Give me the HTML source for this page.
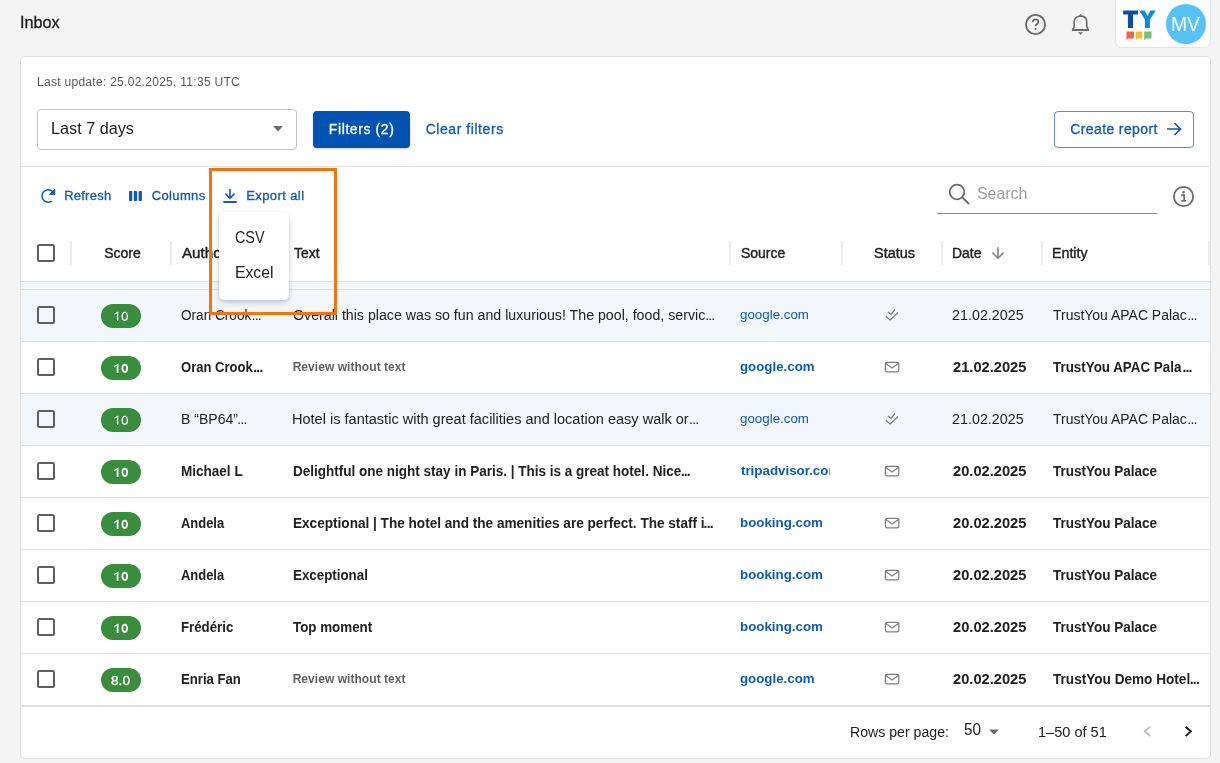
<!DOCTYPE html>
<html><head><meta charset="utf-8"><style>
html,body{margin:0;padding:0;}
body{width:1220px;height:763px;overflow:hidden;background:#f4f4f4;position:relative;font-family:"Liberation Sans", sans-serif;}
.t{position:absolute;white-space:nowrap;line-height:1;}
#w{position:absolute;left:0;top:0;width:1220px;height:763px;background:#f4f4f4;will-change:transform;overflow:hidden;}
</style></head><body><div id="w">
<div class="t" style="left:20.33px;top:15.26px;font-size:16px;font-weight:400;color:#1f1f1f;transform:scaleX(1.0133);transform-origin:0 0;-webkit-text-stroke:0.35px #1f1f1f;">Inbox</div>
<svg style="position:absolute;left:1024px;top:13px;" width="23" height="23" viewBox="0 0 23 23"><circle cx="11.5" cy="11.5" r="9.6" fill="none" stroke="#6b6b6b" stroke-width="1.9"/><path d="M8.6 9.2 C8.6 7.4 9.9 6.4 11.5 6.4 C13.1 6.4 14.4 7.4 14.4 9 C14.4 10.9 11.6 11 11.6 13" fill="none" stroke="#6b6b6b" stroke-width="1.8"/><circle cx="11.6" cy="16" r="1.1" fill="#6b6b6b"/></svg>
<svg style="position:absolute;left:1070px;top:12px;" width="21" height="24" viewBox="0 0 21 24"><path d="M2.6 17.9 L4.1 14.8 L4.2 9.5 C4.3 6.2 6.9 4.1 10.5 4.1 C14.1 4.1 16.6 6.2 16.7 9.5 L16.8 14.8 L18.4 17.9 Z" fill="none" stroke="#6b6b6b" stroke-width="1.6" stroke-linejoin="round"/><path d="M2 18 H19" stroke="#6b6b6b" stroke-width="1.8"/><path d="M9.5 4.3 L10.5 2 L11.5 4.3 Z" fill="#6b6b6b" stroke="#6b6b6b" stroke-width="0.8"/><path d="M7.8 20.3 L13.1 20.3 L10.5 22.8 Z" fill="#6b6b6b"/></svg>
<div style="position:absolute;left:1115px;top:-6px;width:96px;height:54px;background:#fff;border:1px solid #e3e3e3;border-radius:7px;box-sizing:border-box;"></div>
<svg style="position:absolute;left:1115px;top:0px;" width="50" height="48" viewBox="0 0 50 48"><path d="M8.2 10.4 H23 V14.5 H18.1 V28 H12.9 V14.5 H8.2 Z" fill="#0a4f9e"/><path d="M24.2 10.4 H29.7 L32.5 15.9 L35.3 10.4 H40.9 L34.9 19.6 V28 H29.9 V19.6 Z" fill="#0a8ee0"/><path d="M11.5 31.4 H18.9 V38.4 H13.3 L11.5 40.2 Z" fill="#f4634c"/><path d="M20.8 31.4 H27.4 V38.4 H22.5 L20.8 40.2 Z" fill="#fbbc2d"/><path d="M29.2 31.4 H36.5 V38.4 H31 L29.2 40.2 Z" fill="#73c07a"/></svg>
<div style="position:absolute;left:1166px;top:4px;width:40px;height:40px;background:#56c3f5;border-radius:50%;"></div>
<div class="t" style="left:1170.61px;top:14.07px;font-size:20px;font-weight:400;color:#fff;transform:scaleX(0.9647);transform-origin:0 0;">MV</div>
<div style="position:absolute;left:20px;top:56px;width:1191px;height:703px;background:#fff;border:1px solid #e0e0e0;border-radius:5px;box-sizing:border-box;"></div>
<div class="t" style="left:37.05px;top:75.84px;font-size:12px;font-weight:400;color:#5a5a5a;letter-spacing:0.285px;">Last update: 25.02.2025, 11:35 UTC</div>
<div style="position:absolute;left:37px;top:109px;width:260px;height:41px;border:1px solid #c4c4c4;border-radius:4px;box-sizing:border-box;"></div>
<div class="t" style="left:50.63px;top:120.86px;font-size:16px;font-weight:400;color:#212121;transform:scaleX(1.0138);transform-origin:0 0;">Last 7 days</div>
<svg style="position:absolute;left:273px;top:126px;" width="10" height="6" viewBox="0 0 10 6"><path d="M0 0 H10 L5 5.5 Z" fill="#6b6b6b"/></svg>
<div style="position:absolute;left:313px;top:111px;width:97px;height:37px;background:#0053b3;border-radius:4px;box-shadow:0 1px 2px rgba(0,0,0,0.2);"></div>
<div class="t" style="left:328.85px;top:122.35px;font-size:14px;font-weight:400;color:#fff;letter-spacing:0.590px;-webkit-text-stroke:0.3px #fff;">Filters (2)</div>
<div class="t" style="left:425.65px;top:122.35px;font-size:14px;font-weight:400;color:#0d5bb5;letter-spacing:0.558px;-webkit-text-stroke:0.3px #0d5bb5;">Clear filters</div>
<div style="position:absolute;left:1054px;top:111px;width:140px;height:37px;border:1px solid #5a8fd0;border-radius:4px;box-sizing:border-box;"></div>
<div class="t" style="left:1070.25px;top:122.05px;font-size:14px;font-weight:400;color:#0d5bb5;letter-spacing:0.383px;-webkit-text-stroke:0.3px #0d5bb5;">Create report</div>
<svg style="position:absolute;left:1165px;top:121px;" width="18" height="16" viewBox="0 0 18 16"><path d="M2 8 H15.5 M9.5 2 L15.5 8 L9.5 14" fill="none" stroke="#0d5bb5" stroke-width="1.7"/></svg>
<div style="position:absolute;left:21px;top:166px;width:1189px;height:1px;background:#e0e0e0;"></div>
<svg style="position:absolute;left:38px;top:185px;" width="22" height="21" viewBox="0 0 22 21"><path d="M15.72 8.19 A6.2 6.2 0 1 0 13.76 16.08" fill="none" stroke="#0d5bb5" stroke-width="1.5"/><path d="M16.8 4.1 V9.5 H11.6 Z" fill="#0d5bb5" stroke="#0d5bb5" stroke-width="0.9" stroke-linejoin="round"/></svg>
<div class="t" style="left:64.15px;top:188.90px;font-size:13px;font-weight:400;color:#0d5bb5;letter-spacing:0.250px;-webkit-text-stroke:0.3px #0d5bb5;">Refresh</div>
<svg style="position:absolute;left:128px;top:190px;" width="15" height="12" viewBox="0 0 15 12"><rect x="1" y="1" width="3.3" height="10" rx="0.8" fill="#0d5bb5"/><rect x="5.8" y="1" width="3.3" height="10" rx="0.8" fill="#0d5bb5"/><rect x="10.6" y="1" width="3.3" height="10" rx="0.8" fill="#0d5bb5"/></svg>
<div class="t" style="left:151.65px;top:188.90px;font-size:13px;font-weight:400;color:#0d5bb5;letter-spacing:0.383px;-webkit-text-stroke:0.3px #0d5bb5;">Columns</div>
<svg style="position:absolute;left:222px;top:184px;" width="16" height="20" viewBox="0 0 16 20"><path d="M8 5 V14 M3.3 9.5 L8 14.3 L12.7 9.5" fill="none" stroke="#0d5bb5" stroke-width="1.6"/><path d="M2 18 H14" stroke="#0d5bb5" stroke-width="1.8" stroke-linecap="round"/></svg>
<div class="t" style="left:246.15px;top:188.90px;font-size:13px;font-weight:400;color:#0d5bb5;letter-spacing:0.411px;-webkit-text-stroke:0.3px #0d5bb5;">Export all</div>
<svg style="position:absolute;left:947px;top:182px;" width="25" height="24" viewBox="0 0 25 24"><circle cx="10" cy="10" r="7.3" fill="none" stroke="#6b6b6b" stroke-width="1.8"/><path d="M15.3 15.3 L22 22" stroke="#6b6b6b" stroke-width="1.9"/></svg>
<div class="t" style="left:976.75px;top:186.46px;font-size:16px;font-weight:400;color:#9e9e9e;transform:scaleX(0.9939);transform-origin:0 0;">Search</div>
<div style="position:absolute;left:937px;top:213px;width:220px;height:1px;background:#8a8a8a;"></div>
<svg style="position:absolute;left:1172px;top:185px;" width="23" height="23" viewBox="0 0 23 23"><circle cx="11.5" cy="11.5" r="9.6" fill="none" stroke="#6b6b6b" stroke-width="1.8"/><circle cx="11.5" cy="7.3" r="1.2" fill="#6b6b6b"/><path d="M9.3 10.2 H12.2 V15.6 M9.3 15.8 H14" fill="none" stroke="#6b6b6b" stroke-width="1.7"/></svg>
<div style="position:absolute;left:37px;top:244px;width:18px;height:18px;border:2px solid #5f5f5f;border-radius:2.5px;box-sizing:border-box;"></div>
<div style="position:absolute;left:70px;top:241px;width:2px;height:24px;background:#ececec;"></div>
<div style="position:absolute;left:170px;top:241px;width:2px;height:24px;background:#ececec;"></div>
<div style="position:absolute;left:281px;top:241px;width:2px;height:24px;background:#ececec;"></div>
<div style="position:absolute;left:729px;top:241px;width:2px;height:24px;background:#ececec;"></div>
<div style="position:absolute;left:841px;top:241px;width:2px;height:24px;background:#ececec;"></div>
<div style="position:absolute;left:941px;top:241px;width:2px;height:24px;background:#ececec;"></div>
<div style="position:absolute;left:1041px;top:241px;width:2px;height:24px;background:#ececec;"></div>
<div style="position:absolute;left:1208px;top:241px;width:2px;height:24px;background:#ececec;"></div>
<div class="t" style="left:104.15px;top:246.15px;font-size:14px;font-weight:400;color:#1f1f1f;-webkit-text-stroke:0.4px #1f1f1f;">Score</div>
<div class="t" style="left:181.95px;top:246.15px;font-size:14px;font-weight:400;color:#1f1f1f;transform:scaleX(1.0841);transform-origin:0 0;-webkit-text-stroke:0.4px #1f1f1f;">Author</div>
<div class="t" style="left:293.95px;top:246.15px;font-size:14px;font-weight:400;color:#1f1f1f;transform:scaleX(0.9960);transform-origin:0 0;-webkit-text-stroke:0.4px #1f1f1f;">Text</div>
<div class="t" style="left:740.75px;top:246.15px;font-size:14px;font-weight:400;color:#1f1f1f;transform:scaleX(0.9977);transform-origin:0 0;-webkit-text-stroke:0.4px #1f1f1f;">Source</div>
<div class="t" style="left:873.93px;top:246.15px;font-size:14px;font-weight:400;color:#1f1f1f;transform:scaleX(1.0311);transform-origin:0 0;-webkit-text-stroke:0.4px #1f1f1f;">Status</div>
<div class="t" style="left:952.36px;top:246.15px;font-size:14px;font-weight:400;color:#1f1f1f;transform:scaleX(0.9928);transform-origin:0 0;-webkit-text-stroke:0.4px #1f1f1f;">Date</div>
<svg style="position:absolute;left:990px;top:244px;" width="16" height="16" viewBox="0 0 16 16"><path d="M8 3.2 V14 M2.4 8.6 L8 14.2 L13.6 8.6" fill="none" stroke="#858585" stroke-width="1.6"/></svg>
<div class="t" style="left:1052.13px;top:246.15px;font-size:14px;font-weight:400;color:#1f1f1f;transform:scaleX(1.0147);transform-origin:0 0;-webkit-text-stroke:0.4px #1f1f1f;">Entity</div>
<div style="position:absolute;left:21px;top:281px;width:1189px;height:1px;background:#e0e0e0;"></div>
<div style="position:absolute;left:21px;top:282px;width:1189px;height:7px;background:#f3f6fb;"></div>
<div style="position:absolute;left:21px;top:289px;width:1189px;height:52px;background:#f3f6fb;"></div>
<div style="position:absolute;left:21px;top:289px;width:1189px;height:1px;background:#e0e0e0;"></div>
<div style="position:absolute;left:37px;top:306px;width:18px;height:18px;border:2px solid #5f5f5f;border-radius:2.5px;box-sizing:border-box;"></div>
<div style="position:absolute;left:101px;top:304px;width:40px;height:24px;background:#388e3c;border-radius:12px;"></div>
<svg style="position:absolute;left:101px;top:304px;" width="40" height="24" viewBox="0 0 40 24"><path d="M17.25 17 V7.7 H16.65 L13.2 9.7 V10.87 L15.95 9.34 V17 Z" fill="#fff"/><ellipse cx="23.75" cy="12.35" rx="2.55" ry="4.00" fill="none" stroke="#fff" stroke-width="1.3"/></svg>
<div class="t" style="left:181.17px;top:308.15px;font-size:14px;font-weight:400;color:#212121;transform:scaleX(0.9708);transform-origin:0 0;">Oran Crook</div>
<div class="t" style="left:251.65px;top:308.15px;font-size:14px;font-weight:400;color:#212121;letter-spacing:-0.800px;">...</div>
<div class="t" style="left:292.84px;top:308.15px;font-size:14px;font-weight:400;color:#212121;transform:scaleX(1.0135);transform-origin:0 0;">Overall this place was so fun and luxurious! The pool, food, servic</div>
<div class="t" style="left:705.15px;top:308.15px;font-size:14px;font-weight:400;color:#212121;letter-spacing:-0.800px;">...</div>
<div class="t" style="left:740.34px;top:308.20px;font-size:13px;font-weight:400;color:#0d5bb5;transform:scaleX(1.0258);transform-origin:0 0;">google.com</div>
<svg style="position:absolute;left:884px;top:307px;" width="16" height="15" viewBox="0 0 16 15"><path d="M3.8 5.1 L7 7.3 L11 2.3 M2 9.3 L6 13 L14 5.7" fill="none" stroke="#7d7d7d" stroke-width="1.25"/></svg>
<div class="t" style="left:952.33px;top:308.15px;font-size:14px;font-weight:400;color:#212121;transform:scaleX(1.0233);transform-origin:0 0;">21.02.2025</div>
<div class="t" style="left:1052.95px;top:308.15px;font-size:14px;font-weight:400;color:#212121;transform:scaleX(0.9978);transform-origin:0 0;">TrustYou APAC Palac</div>
<div class="t" style="left:1187.35px;top:308.15px;font-size:14px;font-weight:400;color:#212121;letter-spacing:-0.800px;">...</div>
<div style="position:absolute;left:21px;top:341px;width:1189px;height:52px;background:#fff;"></div>
<div style="position:absolute;left:21px;top:341px;width:1189px;height:1px;background:#e0e0e0;"></div>
<div style="position:absolute;left:37px;top:358px;width:18px;height:18px;border:2px solid #5f5f5f;border-radius:2.5px;box-sizing:border-box;"></div>
<div style="position:absolute;left:101px;top:356px;width:40px;height:24px;background:#388e3c;border-radius:12px;"></div>
<svg style="position:absolute;left:101px;top:356px;" width="40" height="24" viewBox="0 0 40 24"><path d="M17.48 17 V7.7 H16.88 L13.2 9.7 V11.27 L15.73 9.70 V17 Z" fill="#fff"/><ellipse cx="23.75" cy="12.35" rx="2.33" ry="3.78" fill="none" stroke="#fff" stroke-width="1.75"/></svg>
<div class="t" style="left:181.28px;top:360.15px;font-size:14px;font-weight:700;color:#212121;transform:scaleX(0.9307);transform-origin:0 0;">Oran Crook</div>
<div class="t" style="left:253.25px;top:360.15px;font-size:14px;font-weight:700;color:#212121;letter-spacing:-0.800px;">...</div>
<div class="t" style="left:292.65px;top:360.84px;font-size:12px;font-weight:700;color:#616161;letter-spacing:0.050px;">Review without text</div>
<div class="t" style="left:740.34px;top:360.20px;font-size:13px;font-weight:700;color:#0d5bb5;transform:scaleX(1.0223);transform-origin:0 0;">google.com</div>
<svg style="position:absolute;left:884px;top:361px;" width="16" height="13" viewBox="0 0 16 13"><rect x="1.4" y="1.4" width="13.4" height="9.4" rx="1.5" fill="none" stroke="#7d7d7d" stroke-width="1.2"/><path d="M1.8 2.6 L8.1 7.1 L14.4 2.6" fill="none" stroke="#7d7d7d" stroke-width="1.2"/></svg>
<div class="t" style="left:952.53px;top:360.15px;font-size:14px;font-weight:700;color:#212121;transform:scaleX(1.0477);transform-origin:0 0;">21.02.2025</div>
<div class="t" style="left:1053.15px;top:360.15px;font-size:14px;font-weight:700;color:#212121;transform:scaleX(0.9555);transform-origin:0 0;">TrustYou APAC Pala</div>
<div class="t" style="left:1182.45px;top:360.15px;font-size:14px;font-weight:700;color:#212121;letter-spacing:-0.800px;">...</div>
<div style="position:absolute;left:21px;top:393px;width:1189px;height:52px;background:#f3f6fb;"></div>
<div style="position:absolute;left:21px;top:393px;width:1189px;height:1px;background:#e0e0e0;"></div>
<div style="position:absolute;left:37px;top:410px;width:18px;height:18px;border:2px solid #5f5f5f;border-radius:2.5px;box-sizing:border-box;"></div>
<div style="position:absolute;left:101px;top:408px;width:40px;height:24px;background:#388e3c;border-radius:12px;"></div>
<svg style="position:absolute;left:101px;top:408px;" width="40" height="24" viewBox="0 0 40 24"><path d="M17.25 17 V7.7 H16.65 L13.2 9.7 V10.87 L15.95 9.34 V17 Z" fill="#fff"/><ellipse cx="23.75" cy="12.35" rx="2.55" ry="4.00" fill="none" stroke="#fff" stroke-width="1.3"/></svg>
<div class="t" style="left:180.65px;top:412.15px;font-size:14px;font-weight:400;color:#212121;transform:scaleX(1.0036);transform-origin:0 0;">B “BP64”</div>
<div class="t" style="left:237.35px;top:412.15px;font-size:14px;font-weight:400;color:#212121;letter-spacing:-0.800px;">...</div>
<div class="t" style="left:292.31px;top:412.15px;font-size:14px;font-weight:400;color:#212121;transform:scaleX(1.0383);transform-origin:0 0;">Hotel is fantastic with great facilities and location easy walk or</div>
<div class="t" style="left:689.05px;top:412.15px;font-size:14px;font-weight:400;color:#212121;letter-spacing:-0.800px;">...</div>
<div class="t" style="left:740.34px;top:412.20px;font-size:13px;font-weight:400;color:#0d5bb5;transform:scaleX(1.0258);transform-origin:0 0;">google.com</div>
<svg style="position:absolute;left:884px;top:411px;" width="16" height="15" viewBox="0 0 16 15"><path d="M3.8 5.1 L7 7.3 L11 2.3 M2 9.3 L6 13 L14 5.7" fill="none" stroke="#7d7d7d" stroke-width="1.25"/></svg>
<div class="t" style="left:952.33px;top:412.15px;font-size:14px;font-weight:400;color:#212121;transform:scaleX(1.0233);transform-origin:0 0;">21.02.2025</div>
<div class="t" style="left:1052.95px;top:412.15px;font-size:14px;font-weight:400;color:#212121;transform:scaleX(0.9978);transform-origin:0 0;">TrustYou APAC Palac</div>
<div class="t" style="left:1187.35px;top:412.15px;font-size:14px;font-weight:400;color:#212121;letter-spacing:-0.800px;">...</div>
<div style="position:absolute;left:21px;top:445px;width:1189px;height:52px;background:#fff;"></div>
<div style="position:absolute;left:21px;top:445px;width:1189px;height:1px;background:#e0e0e0;"></div>
<div style="position:absolute;left:37px;top:462px;width:18px;height:18px;border:2px solid #5f5f5f;border-radius:2.5px;box-sizing:border-box;"></div>
<div style="position:absolute;left:101px;top:460px;width:40px;height:24px;background:#388e3c;border-radius:12px;"></div>
<svg style="position:absolute;left:101px;top:460px;" width="40" height="24" viewBox="0 0 40 24"><path d="M17.48 17 V7.7 H16.88 L13.2 9.7 V11.27 L15.73 9.70 V17 Z" fill="#fff"/><ellipse cx="23.75" cy="12.35" rx="2.33" ry="3.78" fill="none" stroke="#fff" stroke-width="1.75"/></svg>
<div class="t" style="left:180.88px;top:464.15px;font-size:14px;font-weight:700;color:#212121;transform:scaleX(0.9664);transform-origin:0 0;">Michael L</div>
<div class="t" style="left:292.58px;top:464.15px;font-size:14px;font-weight:700;color:#212121;transform:scaleX(0.9651);transform-origin:0 0;">Delightful one night stay in Paris. | This is a great hotel. Nice</div>
<div class="t" style="left:680.65px;top:464.15px;font-size:14px;font-weight:700;color:#212121;letter-spacing:-0.800px;">...</div>
<div style="position:absolute;left:740.85px;top:460.20px;width:89.2px;height:21px;overflow:hidden;"><div class="t" style="left:-0.10px;top:4px;font-size:13px;font-weight:700;color:#0d5bb5;transform:scaleX(1.0251);transform-origin:0 0;">tripadvisor.com</div></div>
<svg style="position:absolute;left:884px;top:465px;" width="16" height="13" viewBox="0 0 16 13"><rect x="1.4" y="1.4" width="13.4" height="9.4" rx="1.5" fill="none" stroke="#7d7d7d" stroke-width="1.2"/><path d="M1.8 2.6 L8.1 7.1 L14.4 2.6" fill="none" stroke="#7d7d7d" stroke-width="1.2"/></svg>
<div class="t" style="left:952.53px;top:464.15px;font-size:14px;font-weight:700;color:#212121;transform:scaleX(1.0477);transform-origin:0 0;">20.02.2025</div>
<div class="t" style="left:1053.15px;top:464.15px;font-size:14px;font-weight:700;color:#212121;transform:scaleX(0.9637);transform-origin:0 0;">TrustYou Palace</div>
<div style="position:absolute;left:21px;top:497px;width:1189px;height:52px;background:#fff;"></div>
<div style="position:absolute;left:21px;top:497px;width:1189px;height:1px;background:#e0e0e0;"></div>
<div style="position:absolute;left:37px;top:514px;width:18px;height:18px;border:2px solid #5f5f5f;border-radius:2.5px;box-sizing:border-box;"></div>
<div style="position:absolute;left:101px;top:512px;width:40px;height:24px;background:#388e3c;border-radius:12px;"></div>
<svg style="position:absolute;left:101px;top:512px;" width="40" height="24" viewBox="0 0 40 24"><path d="M17.48 17 V7.7 H16.88 L13.2 9.7 V11.27 L15.73 9.70 V17 Z" fill="#fff"/><ellipse cx="23.75" cy="12.35" rx="2.33" ry="3.78" fill="none" stroke="#fff" stroke-width="1.75"/></svg>
<div class="t" style="left:181.47px;top:516.15px;font-size:14px;font-weight:700;color:#212121;transform:scaleX(0.9247);transform-origin:0 0;">Andela</div>
<div class="t" style="left:292.58px;top:516.15px;font-size:14px;font-weight:700;color:#212121;transform:scaleX(0.9706);transform-origin:0 0;">Exceptional | The hotel and the amenities are perfect. The staff i</div>
<div class="t" style="left:703.55px;top:516.15px;font-size:14px;font-weight:700;color:#212121;letter-spacing:-0.800px;">...</div>
<div class="t" style="left:740.03px;top:516.20px;font-size:13px;font-weight:700;color:#0d5bb5;transform:scaleX(1.0252);transform-origin:0 0;">booking.com</div>
<svg style="position:absolute;left:884px;top:517px;" width="16" height="13" viewBox="0 0 16 13"><rect x="1.4" y="1.4" width="13.4" height="9.4" rx="1.5" fill="none" stroke="#7d7d7d" stroke-width="1.2"/><path d="M1.8 2.6 L8.1 7.1 L14.4 2.6" fill="none" stroke="#7d7d7d" stroke-width="1.2"/></svg>
<div class="t" style="left:952.53px;top:516.15px;font-size:14px;font-weight:700;color:#212121;transform:scaleX(1.0477);transform-origin:0 0;">20.02.2025</div>
<div class="t" style="left:1053.15px;top:516.15px;font-size:14px;font-weight:700;color:#212121;transform:scaleX(0.9637);transform-origin:0 0;">TrustYou Palace</div>
<div style="position:absolute;left:21px;top:549px;width:1189px;height:52px;background:#fff;"></div>
<div style="position:absolute;left:21px;top:549px;width:1189px;height:1px;background:#e0e0e0;"></div>
<div style="position:absolute;left:37px;top:566px;width:18px;height:18px;border:2px solid #5f5f5f;border-radius:2.5px;box-sizing:border-box;"></div>
<div style="position:absolute;left:101px;top:564px;width:40px;height:24px;background:#388e3c;border-radius:12px;"></div>
<svg style="position:absolute;left:101px;top:564px;" width="40" height="24" viewBox="0 0 40 24"><path d="M17.48 17 V7.7 H16.88 L13.2 9.7 V11.27 L15.73 9.70 V17 Z" fill="#fff"/><ellipse cx="23.75" cy="12.35" rx="2.33" ry="3.78" fill="none" stroke="#fff" stroke-width="1.75"/></svg>
<div class="t" style="left:181.47px;top:568.15px;font-size:14px;font-weight:700;color:#212121;transform:scaleX(0.9247);transform-origin:0 0;">Andela</div>
<div class="t" style="left:292.59px;top:568.15px;font-size:14px;font-weight:700;color:#212121;transform:scaleX(0.9531);transform-origin:0 0;">Exceptional</div>
<div class="t" style="left:740.03px;top:568.20px;font-size:13px;font-weight:700;color:#0d5bb5;transform:scaleX(1.0252);transform-origin:0 0;">booking.com</div>
<svg style="position:absolute;left:884px;top:569px;" width="16" height="13" viewBox="0 0 16 13"><rect x="1.4" y="1.4" width="13.4" height="9.4" rx="1.5" fill="none" stroke="#7d7d7d" stroke-width="1.2"/><path d="M1.8 2.6 L8.1 7.1 L14.4 2.6" fill="none" stroke="#7d7d7d" stroke-width="1.2"/></svg>
<div class="t" style="left:952.53px;top:568.15px;font-size:14px;font-weight:700;color:#212121;transform:scaleX(1.0477);transform-origin:0 0;">20.02.2025</div>
<div class="t" style="left:1053.15px;top:568.15px;font-size:14px;font-weight:700;color:#212121;transform:scaleX(0.9637);transform-origin:0 0;">TrustYou Palace</div>
<div style="position:absolute;left:21px;top:601px;width:1189px;height:52px;background:#fff;"></div>
<div style="position:absolute;left:21px;top:601px;width:1189px;height:1px;background:#e0e0e0;"></div>
<div style="position:absolute;left:37px;top:618px;width:18px;height:18px;border:2px solid #5f5f5f;border-radius:2.5px;box-sizing:border-box;"></div>
<div style="position:absolute;left:101px;top:616px;width:40px;height:24px;background:#388e3c;border-radius:12px;"></div>
<svg style="position:absolute;left:101px;top:616px;" width="40" height="24" viewBox="0 0 40 24"><path d="M17.48 17 V7.7 H16.88 L13.2 9.7 V11.27 L15.73 9.70 V17 Z" fill="#fff"/><ellipse cx="23.75" cy="12.35" rx="2.33" ry="3.78" fill="none" stroke="#fff" stroke-width="1.75"/></svg>
<div class="t" style="left:180.90px;top:620.15px;font-size:14px;font-weight:700;color:#212121;transform:scaleX(0.9462);transform-origin:0 0;">Frédéric</div>
<div class="t" style="left:293.35px;top:620.15px;font-size:14px;font-weight:700;color:#212121;transform:scaleX(0.9553);transform-origin:0 0;">Top moment</div>
<div class="t" style="left:740.03px;top:620.20px;font-size:13px;font-weight:700;color:#0d5bb5;transform:scaleX(1.0252);transform-origin:0 0;">booking.com</div>
<svg style="position:absolute;left:884px;top:621px;" width="16" height="13" viewBox="0 0 16 13"><rect x="1.4" y="1.4" width="13.4" height="9.4" rx="1.5" fill="none" stroke="#7d7d7d" stroke-width="1.2"/><path d="M1.8 2.6 L8.1 7.1 L14.4 2.6" fill="none" stroke="#7d7d7d" stroke-width="1.2"/></svg>
<div class="t" style="left:952.53px;top:620.15px;font-size:14px;font-weight:700;color:#212121;transform:scaleX(1.0477);transform-origin:0 0;">20.02.2025</div>
<div class="t" style="left:1053.15px;top:620.15px;font-size:14px;font-weight:700;color:#212121;transform:scaleX(0.9637);transform-origin:0 0;">TrustYou Palace</div>
<div style="position:absolute;left:21px;top:653px;width:1189px;height:52px;background:#fff;"></div>
<div style="position:absolute;left:21px;top:653px;width:1189px;height:1px;background:#e0e0e0;"></div>
<div style="position:absolute;left:37px;top:670px;width:18px;height:18px;border:2px solid #5f5f5f;border-radius:2.5px;box-sizing:border-box;"></div>
<div style="position:absolute;left:101px;top:668px;width:40px;height:24px;background:#388e3c;border-radius:12px;"></div>
<div class="t" style="left:111.47px;top:674.00px;font-size:13px;font-weight:400;color:#fff;transform:scaleX(1.0526);transform-origin:0 0;-webkit-text-stroke:0.35px #fff;">8.0</div>
<div class="t" style="left:180.91px;top:672.15px;font-size:14px;font-weight:700;color:#212121;transform:scaleX(0.9388);transform-origin:0 0;">Enria Fan</div>
<div class="t" style="left:292.65px;top:672.84px;font-size:12px;font-weight:700;color:#616161;letter-spacing:0.050px;">Review without text</div>
<div class="t" style="left:740.34px;top:672.20px;font-size:13px;font-weight:700;color:#0d5bb5;transform:scaleX(1.0223);transform-origin:0 0;">google.com</div>
<svg style="position:absolute;left:884px;top:673px;" width="16" height="13" viewBox="0 0 16 13"><rect x="1.4" y="1.4" width="13.4" height="9.4" rx="1.5" fill="none" stroke="#7d7d7d" stroke-width="1.2"/><path d="M1.8 2.6 L8.1 7.1 L14.4 2.6" fill="none" stroke="#7d7d7d" stroke-width="1.2"/></svg>
<div class="t" style="left:952.53px;top:672.15px;font-size:14px;font-weight:700;color:#212121;transform:scaleX(1.0477);transform-origin:0 0;">20.02.2025</div>
<div class="t" style="left:1053.15px;top:672.15px;font-size:14px;font-weight:700;color:#212121;transform:scaleX(0.9708);transform-origin:0 0;">TrustYou Demo Hotel</div>
<div class="t" style="left:1189.75px;top:672.15px;font-size:14px;font-weight:700;color:#212121;letter-spacing:-0.800px;">...</div>
<div style="position:absolute;left:21px;top:705px;width:1189px;height:1.5px;background:#dedede;"></div>
<div class="t" style="left:850.24px;top:725.15px;font-size:14px;font-weight:400;color:#212121;transform:scaleX(1.0094);transform-origin:0 0;">Rows per page:</div>
<div class="t" style="left:964.48px;top:722.26px;font-size:16px;font-weight:400;color:#212121;transform:scaleX(0.9518);transform-origin:0 0;">50</div>
<svg style="position:absolute;left:989px;top:729px;" width="10" height="6" viewBox="0 0 10 6"><path d="M0 0.5 H10 L5 5.5 Z" fill="#6b6b6b"/></svg>
<div class="t" style="left:1038.01px;top:725.15px;font-size:14px;font-weight:400;color:#212121;transform:scaleX(1.0388);transform-origin:0 0;">1–50 of 51</div>
<svg style="position:absolute;left:1141px;top:723px;" width="12" height="16" viewBox="0 0 12 16"><path d="M9.2 3.6 L3.9 8.3 L9.2 13" fill="none" stroke="#bdbdbd" stroke-width="1.9"/></svg>
<svg style="position:absolute;left:1182px;top:723px;" width="12" height="16" viewBox="0 0 12 16"><path d="M3.6 3.8 L8.8 8.3 L3.6 13.1" fill="none" stroke="#1a1a1a" stroke-width="1.9"/></svg>
<div style="position:absolute;left:219px;top:212px;width:70px;height:88px;background:#fff;border-radius:5px;box-shadow:0 3px 6px rgba(0,0,0,0.16),0 1px 3px rgba(0,0,0,0.1);"></div>
<div class="t" style="left:235.23px;top:229.66px;font-size:16px;font-weight:400;color:#212121;transform:scaleX(0.8969);transform-origin:0 0;">CSV</div>
<div class="t" style="left:234.67px;top:265.26px;font-size:16px;font-weight:400;color:#212121;transform:scaleX(0.9837);transform-origin:0 0;">Excel</div>
<div style="position:absolute;left:208.5px;top:168.3px;width:128.3px;height:146.4px;border:3.2px solid #f5730c;box-sizing:border-box;"></div>
</div></body></html>
